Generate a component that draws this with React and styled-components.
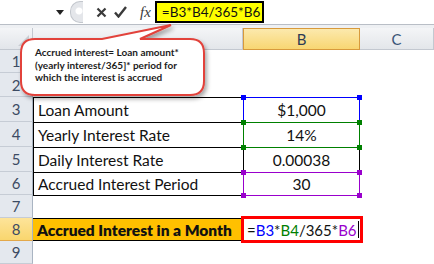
import React from 'react';
import styled, { createGlobalStyle } from 'styled-components';

const Global = createGlobalStyle`
  html, body { margin: 0; padding: 0; background: #ffffff; }
  body { font-family: Lato, "Open Sans", sans-serif; overflow: hidden; }
`;

const Window = styled.div`
  position: relative;
  width: 434px;
  height: 264px;
  overflow: hidden;
  background: #ffffff;
`;

const FormulaBar = styled.div`
  display: flex;
  align-items: center;
  height: 25px;
  box-sizing: border-box;
  border-bottom: 1px solid #b9bec6;
  background: #ffffff;
`;

const NameBox = styled.div`
  width: 68px;
  height: 100%;
  display: flex;
  align-items: center;
  justify-content: flex-end;
  padding-right: 4px;
  box-sizing: border-box;
`;

const Splitter = styled.div`
  width: 12px;
  height: 20px;
  margin-left: 2px;
  border-radius: 10px 0 0 10px;
  border: 1px solid #c3c7cd;
  border-right: none;
  background: radial-gradient(circle at 8px 9px, #ffffff 0 3px, #e4e6ea 4px);
`;

const IconRow = styled.div`
  display: flex;
  align-items: center;
  gap: 7px;
  padding: 0 4px 0 13px;
  height: 100%;
  color: #3c3c3c;
`;

const Fx = styled.span`
  font-family: "Liberation Serif", serif;
  font-style: italic;
  font-size: 15px;
  color: #3a3a3a;
  margin-left: 6px;
`;

const FormulaBox = styled.div`
  height: 22px;
  width: 109px;
  box-sizing: border-box;
  border: 2px solid #000000;
  background: #ffff00;
  display: flex;
  align-items: center;
  padding-left: 5px;
  white-space: nowrap;
  overflow: hidden;
  font-family: Lato, sans-serif;
  font-size: 13.5px;
  color: #111;
`;

const Gap = styled.div`
  height: 3px;
  background: #eef0f3;
`;

const Sheet = styled.div`
  display: grid;
  grid-template-columns: 33px 210px 117px 1fr;
  grid-template-rows: 22px 23px 24px 25px 25px 25px 23px 23px 23px 23px;
`;

const Corner = styled.div`
  background: linear-gradient(#f4f5f7, #e2e5ea);
  border-right: 1px solid #c3c8d0;
  border-bottom: 1px solid #c3c8d0;
  box-sizing: border-box;
  position: relative;
  &::after {
    content: '';
    position: absolute;
    right: 3px;
    bottom: 3px;
    border-left: 11px solid transparent;
    border-bottom: 11px solid #c9cdd3;
  }
`;

const ColHead = styled.div`
  display: flex;
  align-items: center;
  justify-content: center;
  box-sizing: border-box;
  font-size: 15px;
  color: ${p => (p.$sel ? '#2d3c55' : '#3b5577')};
  background: ${p => (p.$sel ? 'linear-gradient(#fce9ad, #f8d672)' : 'linear-gradient(#f4f5f7, #e3e6ea)')};
  border: ${p => (p.$sel ? '1px solid #d89a3c' : 'none')};
  border-bottom: 1px solid ${p => (p.$sel ? '#d89a3c' : '#c3c8d0')};
  border-right: 1px solid ${p => (p.$sel ? '#d89a3c' : '#c3c8d0')};
`;

const RowHead = styled.div`
  display: flex;
  align-items: center;
  justify-content: center;
  box-sizing: border-box;
  font-size: 15px;
  color: #3c4b63;
  background: ${p => (p.$sel ? 'linear-gradient(#fde49a, #f9d66e)' : '#e4e8ee')};
  border-bottom: 1px solid ${p => (p.$sel ? '#e3a84a' : '#c6ccd5')};
  border-right: 1px solid #a9b4c2;
`;

const Cell = styled.div`
  position: relative;
  display: flex;
  align-items: center;
  justify-content: ${p => (p.$center ? 'center' : 'flex-start')};
  box-sizing: border-box;
  padding-left: ${p => (p.$center ? '0' : '4px')};
  font-size: 15.5px;
  font-weight: ${p => (p.$bold ? 800 : 400)};
  white-space: nowrap;
  color: #111111;
  background: ${p => p.$fill || 'transparent'};
  border-top: ${p => (p.$box || p.$line ? '1px solid #000' : 'none')};
  border-left: ${p => (p.$box ? '1px solid #000' : 'none')};
  border-right: ${p => (p.$right ? '1px solid #000' : 'none')};
  border-bottom: ${p => (p.$box || p.$line ? '1px solid #000' : 'none')};
  margin-bottom: ${p => (p.$box ? '-1px' : '0')};
`;

const RangeMark = styled.span`
  position: absolute;
  inset: -3px;
  pointer-events: none;
  z-index: 2;
  background:
    linear-gradient(${p => p.$color}, ${p => p.$color}) left top / 5px 5px no-repeat,
    linear-gradient(${p => p.$color}, ${p => p.$color}) right top / 5px 5px no-repeat,
    linear-gradient(${p => p.$color}, ${p => p.$color}) left bottom / 5px 5px no-repeat,
    linear-gradient(${p => p.$color}, ${p => p.$color}) right bottom / 5px 5px no-repeat;
  &::before {
    content: '';
    position: absolute;
    inset: 2px;
    border: 1px solid ${p => p.$color};
  }
`;

const EditCell = styled.div`
  position: relative;
  z-index: 3;
  margin: -2px -3px -2px -2px;
  display: flex;
  align-items: center;
  padding-left: 3px;
  border: 3px solid #ff0000;
  background: #ffffff;
  font-size: 15px;
  white-space: nowrap;
  color: #111;
`;

const Ref = styled.span`
  color: ${p => p.$color};
`;

const Caret = styled.span`
  display: inline-block;
  width: 1px;
  height: 17px;
  background: #000;
  margin-left: 1px;
`;

const Callout = styled.div`
  position: absolute;
  left: 20px;
  top: 24px;
  width: 190px;
  height: 80px;
  z-index: 5;
`;

const CalloutShape = styled.svg`
  position: absolute;
  inset: 0;
  overflow: visible;
`;

const CalloutText = styled.div`
  position: absolute;
  left: 15px;
  top: 22px;
  width: 170px;
  font-family: Lato, sans-serif;
  font-size: 10px;
  font-weight: 700;
  line-height: 12.5px;
  white-space: nowrap;
  color: #1c1c1c;
`;

const rows = [
  { n: 1 },
  { n: 2 },
  { n: 3, a: 'Loan Amount', b: '$1,000', mark: '#0000ff' },
  { n: 4, a: 'Yearly Interest Rate', b: '14%', mark: '#008000' },
  { n: 5, a: 'Daily Interest Rate', b: '0.00038' },
  { n: 6, a: 'Accrued Interest Period', b: '30', mark: '#9900cc' },
  { n: 7 },
  { n: 8, edit: true },
  { n: 9 },
];

export default function App() {
  return (
    <Window>
      <Global />
      <FormulaBar>
        <NameBox>
          <svg width="8" height="5" viewBox="0 0 8 5"><path d="M0 0h8L4 5z" fill="#222" /></svg>
        </NameBox>
        <Splitter />
        <IconRow>
          <svg width="11" height="11" viewBox="0 0 11 11"><path d="M1.5 1.5l8 8M9.5 1.5l-8 8" stroke="#3a3a3a" strokeWidth="2.2" /></svg>
          <svg width="13" height="12" viewBox="0 0 13 12"><path d="M1 6.5l3.5 4L12 1" stroke="#3a3a3a" strokeWidth="2.4" fill="none" /></svg>
          <Fx>fx</Fx>
        </IconRow>
        <FormulaBox>=B3*B4/365*B6</FormulaBox>
      </FormulaBar>
      <Gap />
      <Sheet>
        <Corner />
        <ColHead />
        <ColHead $sel>B</ColHead>
        <ColHead>C</ColHead>
        {rows.map(r => (
          <React.Fragment key={r.n}>
            <RowHead $sel={r.edit}>{r.n}</RowHead>
            {r.edit ? (
              <Cell $fill="#ffc000" $bold $line>
                Accrued Interest in a Month
              </Cell>
            ) : (
              <Cell $box={!!r.a}>{r.a}</Cell>
            )}
            {r.edit ? (
              <EditCell>
                =<Ref $color="#0000ff">B3</Ref>*<Ref $color="#008000">B4</Ref>/365*<Ref $color="#9900cc">B6</Ref>
                <Caret />
              </EditCell>
            ) : (
              <Cell $center $box={!!r.b} $right={!!r.b}>
                {r.b}
                {r.mark && <RangeMark $color={r.mark} />}
              </Cell>
            )}
            <Cell />
          </React.Fragment>
        ))}
      </Sheet>
      <Callout>
        <CalloutShape width="190" height="80" viewBox="0 0 190 80">
          <defs>
            <filter id="sh" x="-10%" y="-10%" width="130%" height="140%">
              <feDropShadow dx="2" dy="3" stdDeviation="2" floodColor="#000" floodOpacity="0.35" />
            </filter>
          </defs>
          <path
            d="M15 15 H82 L151 1 L120 15 H170 Q184 15 184 29 V57 Q184 71 170 71 H15 Q1 71 1 57 V29 Q1 15 15 15 Z"
            fill="#ffffff"
            stroke="#e2423b"
            strokeWidth="2"
            filter="url(#sh)"
          />
        </CalloutShape>
        <CalloutText>
          Accrued interest= Loan amount*
          <br />
          (yearly interest/365]* period for
          <br />
          which the interest is accrued
        </CalloutText>
      </Callout>
    </Window>
  );
}
